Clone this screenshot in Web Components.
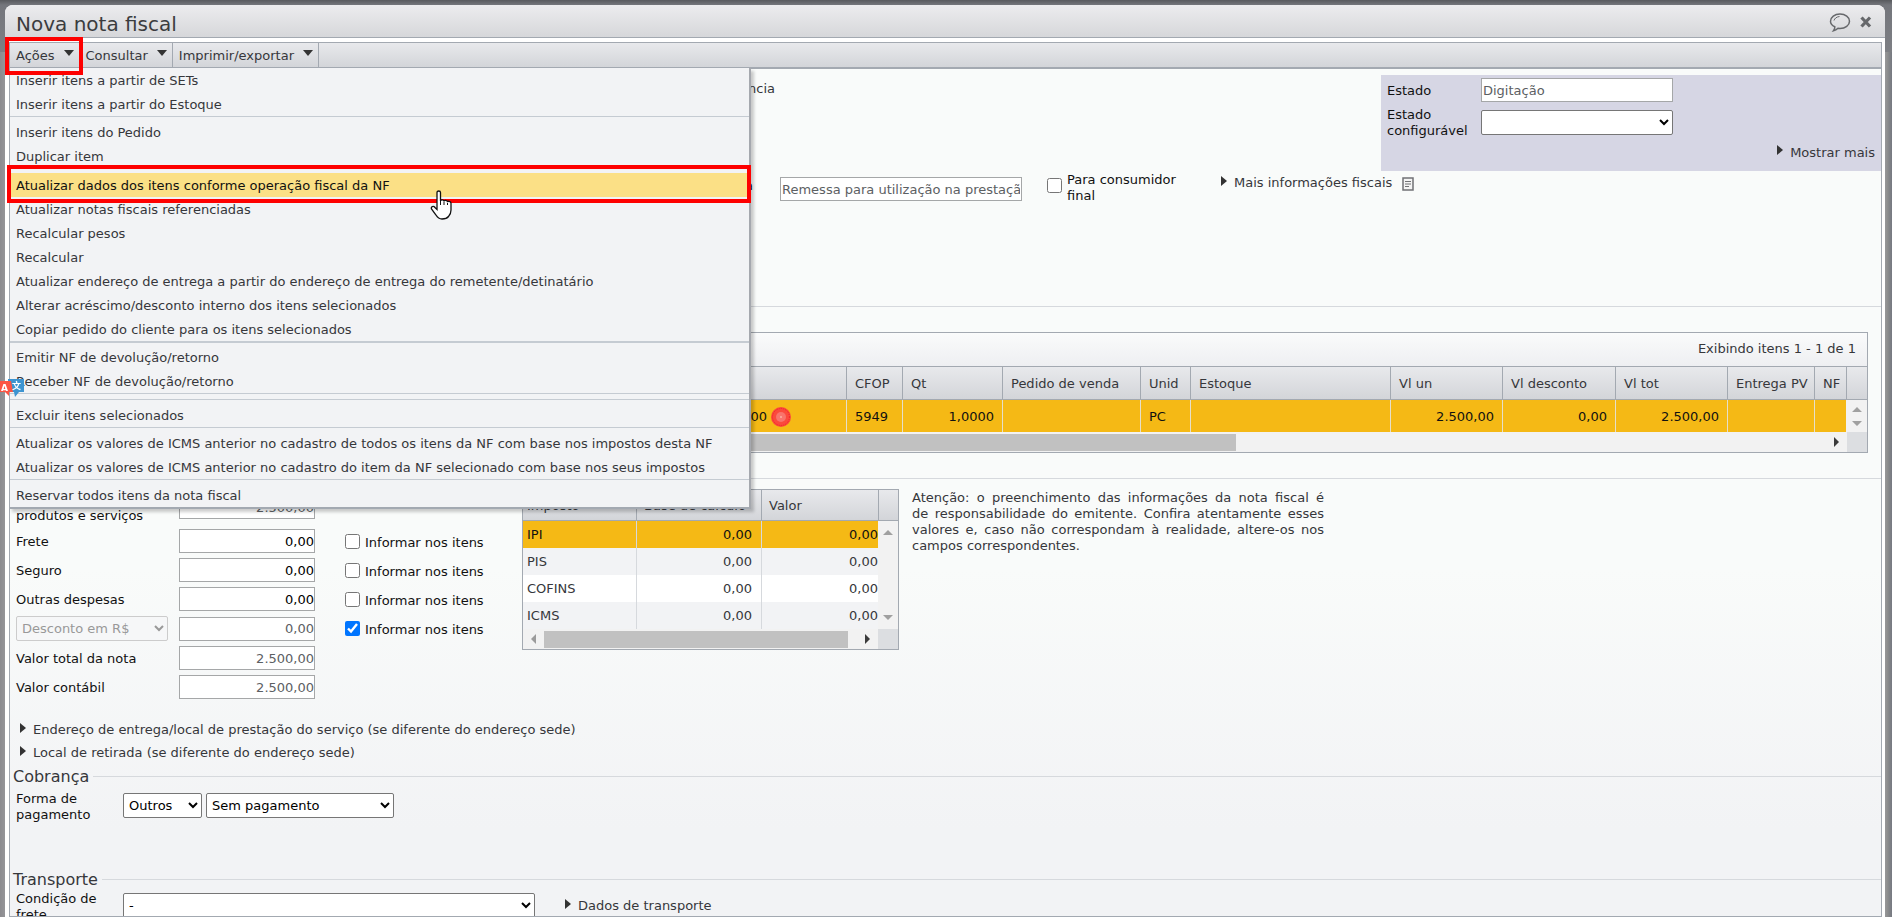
<!DOCTYPE html>
<html lang="pt-BR">
<head>
<meta charset="utf-8">
<title>Nova nota fiscal</title>
<style>
  html, body { height: 100%; }
  body {
    margin: 0; overflow: hidden;
    font: 13px/16px "DejaVu Sans", Verdana, sans-serif; color: #36373b;
    background: linear-gradient(90deg, #8b8b8f 0, #97979a 6px, #97979a calc(100% - 7px), #8f9090 calc(100% - 5px), #757880 100%);
    --line: #a3a9b1; --rule: #d6d9dd;
    --bar: linear-gradient(#e8e9ec, #d3d5d9);
    --plain: #f2f3f5; --gold: #f5b915; --red: #fe0000;
  }
</style>
</head>
<body>
<nf-window>
  <span slot="title">Nova nota fiscal</span>
  <nf-toolbar slot="toolbar">
    <nf-menu-button marked>Ações
      <nf-menu slot="menu">
        <nf-menu-item>Inserir itens a partir de SETs</nf-menu-item>
        <nf-menu-item>Inserir itens a partir do Estoque</nf-menu-item>
        <nf-separator></nf-separator>
        <nf-menu-item>Inserir itens do Pedido</nf-menu-item>
        <nf-menu-item>Duplicar item</nf-menu-item>
        <nf-separator></nf-separator>
        <nf-menu-item active>Atualizar dados dos itens conforme operação fiscal da NF</nf-menu-item>
        <nf-menu-item>Atualizar notas fiscais referenciadas</nf-menu-item>
        <nf-menu-item>Recalcular pesos</nf-menu-item>
        <nf-menu-item>Recalcular</nf-menu-item>
        <nf-menu-item>Atualizar endereço de entrega a partir do endereço de entrega do remetente/detinatário</nf-menu-item>
        <nf-menu-item>Alterar acréscimo/desconto interno dos itens selecionados</nf-menu-item>
        <nf-menu-item>Copiar pedido do cliente para os itens selecionados</nf-menu-item>
        <nf-separator heavy></nf-separator>
        <nf-menu-item>Emitir NF de devolução/retorno</nf-menu-item>
        <nf-menu-item>Receber NF de devolução/retorno</nf-menu-item>
        <nf-separator wide></nf-separator>
        <nf-separator></nf-separator>
        <nf-menu-item>Excluir itens selecionados</nf-menu-item>
        <nf-separator></nf-separator>
        <nf-menu-item>Atualizar os valores de ICMS anterior no cadastro de todos os itens da NF com base nos impostos desta NF</nf-menu-item>
        <nf-menu-item>Atualizar os valores de ICMS anterior no cadastro do item da NF selecionado com base nos seus impostos</nf-menu-item>
        <nf-separator></nf-separator>
        <nf-menu-item>Reservar todos itens da nota fiscal</nf-menu-item>
      </nf-menu>
    </nf-menu-button>
    <nf-menu-button>Consultar</nf-menu-button>
    <nf-menu-button>Imprimir/exportar</nf-menu-button>
  </nf-toolbar>

  <nf-general></nf-general>
  <nf-section class="items"><nf-items></nf-items></nf-section>
  <nf-section class="values"><nf-values></nf-values></nf-section>
  <nf-disclosure tall>Endereço de entrega/local de prestação do serviço (se diferente do endereço sede)</nf-disclosure>
  <nf-disclosure tall>Local de retirada (se diferente do endereço sede)</nf-disclosure>
  <nf-section class="payment"><span slot="legend">Cobrança</span><nf-payment></nf-payment></nf-section>
  <nf-section><span slot="legend">Transporte</span><nf-shipping></nf-shipping></nf-section>
</nf-window>
<nf-translate></nf-translate>

<script>
const controls = `
  *, *::before, *::after { box-sizing: border-box; }
  input, select, button { font: inherit; margin: 0; }
  input[type=text] { height: 24px; padding: 0 1px; border: 1px solid #a5a7a8; border-radius: 0; background: #fff; color: #000; outline: 0; }
  input[readonly] { color: #5c6063; }
  input.num { text-align: right; padding: 0; }
  input[type=checkbox] { width: 15px; height: 15px; }
  select { height: 25px; border: 1px solid #767676; border-radius: 2px; background: #fff; color: #000; padding: 0 0 0 1px; }
  label { color: #111; }
  table { border-collapse: separate; border-spacing: 0; table-layout: fixed; width: 100%; }
  th { font-weight: normal; text-align: left; }
`;

function define(name, css, html) {
  const template = document.createElement('template');
  template.innerHTML = `<style>${controls}${css}</style>${html}`;
  customElements.define(name, class extends HTMLElement {
    constructor() {
      super();
      this.attachShadow({ mode: 'open' }).append(template.content.cloneNode(true));
    }
  });
}

define('nf-window', `
  :host { display: flex; flex-direction: column; height: 100vh; padding: 5px 7px 0 5px; box-sizing: border-box;
    background: linear-gradient(#585a5e 0, #74767c 5px, #7d7f84 52px, transparent 52px); }
  .frame { flex: 1; min-height: 0; display: flex; flex-direction: column; background: #fff; border-radius: 8px 8px 0 0; }
  header { flex: none; display: flex; align-items: center; gap: 8px; height: 33px; padding: 6px 12px 0 11px; background: linear-gradient(#ececee, #d6d7da); border-bottom: 1px solid var(--line); border-radius: 8px 8px 0 0; }
  h1 { flex: 1; margin: 0; font-size: 20px; line-height: 26px; font-weight: normal; color: #3b3c3e; }
  button { display: flex; border: 0; padding: 0; background: none; margin-top: -4px; }
  .body { flex: 1; min-height: 0; display: flex; flex-direction: column; margin: 4px 3px 0 4px; }
  main { flex: 1; min-height: 0; overflow: hidden; border: 1px solid var(--line); border-top: 0; background: linear-gradient(#f9fbfa 500px, #f2f3f5 760px); }
  ::slotted(nf-section.items) { margin-bottom: 15px; }
  ::slotted(nf-section.values) { margin-bottom: 19px; }
  ::slotted(nf-section.payment) { margin-top: 2px; }
`, `
  <div class="frame">
    <header>
      <h1><slot name="title"></slot></h1>
      <button aria-label="Comentários"><svg width="22" height="20" viewBox="0 0 22 20" fill="none" stroke="#66686b" stroke-width="1.5"><path d="M5.8 14.8C3 13.600 1.500 11.500 1.500 9.300 1.500 5 5.700 2 11 2s9.500 3 9.500 7.200-4.200 7.200-9.500 7.200l-2-.1C7.800 17.500 6.200 18.500 4.500 18.800c1-1.200 1.400-2.500 1.300-4z"/><path d="M5 8.500C5.500 6.500 7.600 4.800 10.500 4.500" stroke-width="1"/></svg></button>
      <button aria-label="Fechar"><svg width="14" height="14" viewBox="0 0 14 14" stroke="#66686b" stroke-width="3.200"><path d="M2.500 2.500l8.500 9M11 2.500l-8.500 9"/></svg></button>
    </header>
    <div class="body">
      <slot name="toolbar"></slot>
      <main><slot></slot></main>
    </div>
  </div>`);

define('nf-toolbar', `
  :host { flex: none; display: flex; height: 27px; box-sizing: border-box; border: 1px solid var(--line); border-bottom-width: 2px; background: var(--bar); position: relative; z-index: 5; }
`, `<slot></slot>`);

define('nf-menu-button', `
  :host { display: flex; position: relative; border-right: 1px solid var(--line); }
  button { display: flex; align-items: center; gap: 9px; border: 0; padding: 2px 5px 0 6px; background: none; color: inherit; white-space: nowrap; }
  button svg { margin-top: -6px; }
  :host([marked]) button::after { content: ""; position: absolute; inset: -6px -4px -8px -5px; border: 4px solid var(--red); z-index: 3; }
`, `<button aria-haspopup="menu"><span><slot></slot></span><svg width="10" height="6"><path d="M0 0h10L5 6z" fill="#333"/></svg></button><slot name="menu"></slot>`);

define('nf-menu', `
  :host { display: block; position: absolute; top: 25px; left: -1px; z-index: 2; width: 742px; box-sizing: border-box; background: var(--plain);
    border: 1px solid var(--line); border-width: 0 2px 2px 1px; border-right-color: #a5a8ae; box-shadow: 3px 3px 3px #0003; }
`, `<div role="menu"><slot></slot></div>`);

define('nf-menu-item', `
  :host { display: block; position: relative; }
  button { display: block; width: 100%; height: 24px; border: 0; padding: 2px 0 0 6px; text-align: left; background: none; color: inherit; white-space: nowrap; }
  .cursor { display: none; }
  :host([active]) { z-index: 1; margin-top: 4px; }
  :host([active]) button { background: #fbe086; color: #111; }
  :host([active]) button::after { content: ""; position: absolute; inset: -8px -2px -6px -3px; border: 4px solid var(--red); }
  :host([active]) .cursor { display: block; position: absolute; left: 420px; top: 17px; }
`, `<button role="menuitem"><slot></slot></button>
  <svg class="cursor" width="22" height="30" viewBox="0 0 22 30"><path d="M7 2.500C7 .5 10.500.5 10.500 2.500V11c0-1.500 3.500-1.500 3.500.5 0-1.600 3.500-1.400 3.500.7 0-1.500 3.500-1.200 3.500 1V20c0 3-1 5-2.500 6.500-1.500 2-4 2.500-6.500 2.500-3 0-4.500-1.500-6-4L1.500 19C.5 16.500 3.500 15.500 5 17.500L7 19.500z" fill="#fff" stroke="#111" stroke-width="1.300"/><path d="M10.500 11v4M14 12v3M17.500 13v2" stroke="#111"/></svg>`);

define('nf-separator', `
  :host { display: block; height: 1px; margin-bottom: 3px; background: #c5cbd2; }
  :host([heavy]) { height: 2px; margin-bottom: 2px; }
  :host([wide]) { margin-bottom: 5px; }
`, ``);

define('nf-disclosure', `
  :host { display: block; }
  :host([tall]) { height: 23px; padding-left: 10px; }
  a { display: inline-flex; align-items: center; gap: 7px; color: inherit; text-decoration: none; line-height: 23px; white-space: nowrap; }
  svg { flex: none; margin-top: -4px; }
`, `<a href="#"><svg width="6" height="10"><path d="M0 0l6 5-6 5z" fill="#333"/></svg><slot></slot></a>`);

define('nf-section', `
  :host { display: block; }
  .legend { display: flex; align-items: center; gap: 4px; height: 20px; padding-left: 3px; font-size: 16px; line-height: 20px; }
  .legend::after { content: ""; flex: 1; height: 1px; background: var(--rule); }
  ::slotted([slot=legend]) { padding-top: 2px; }
`, `<div class="legend"><slot name="legend"></slot></div><slot></slot>`);

define('nf-general', `
  :host { display: block; padding-top: 6px; height: 227px; box-sizing: border-box; }
  .top { display: flex; justify-content: space-between; }
  .ref { width: 765px; padding-top: 6px; text-align: right; }
  .state { width: 500px; height: 96px; background: #d6d6e4; display: grid; grid-template-columns: 94px 192px; grid-template-rows: 24px 32px 20px; row-gap: 4px; padding: 3px 6px 0; }
  .state label { align-self: center; padding-top: 2px; }
  .state input, .state select { width: 192px; }
  .state select { align-self: center; }
  .more { grid-column: 1 / -1; width: 488px; text-align: right; align-self: center; }
  .row { display: flex; align-items: flex-start; padding-top: 6px; }
  .row .kind { width: 743px; margin-right: 27px; text-align: right; padding-top: 1px; }
  .row input[type=text] { width: 242px; }
  .row input[type=checkbox] { margin: 1px 5px 0 25px; }
  .row label.c { width: 120px; margin-top: -5px; }
  .row nf-disclosure { margin: -6px 10px 0 34px; }
`, `
  <div class="top">
    <div class="ref">Referência</div>
    <div class="state">
      <label for="st">Estado</label><input id="st" type="text" readonly value="Digitação">
      <label for="cf">Estado configurável</label><select id="cf"><option></option></select>
      <nf-disclosure class="more">Mostrar mais</nf-disclosure>
    </div>
  </div>
  <div class="row">
    <label class="kind" for="op">a</label>
    <input id="op" type="text" readonly value="Remessa para utilização na prestação de serviço">
    <input id="cons" type="checkbox"><label class="c" for="cons">Para consumidor final</label>
    <nf-disclosure>Mais informações fiscais</nf-disclosure>
    <svg width="12" height="14" viewBox="0 0 12 14" fill="none" stroke="#707275"><rect x="1" y="1" width="10" height="12" stroke-width="1.500" fill="#f4f4f4"/><path d="M3 4.500h6M3 7h6M3 9.500h4"/></svg>
  </div>`);

define('nf-scrollbar', `
  :host { display: grid; grid-template-columns: 1fr 20px; height: 20px; }
  .track { display: flex; align-items: center; gap: 8px; padding: 0 8px; background: #f2f2f2; }
  .rail { flex: 1; height: 17px; }
  .thumb { height: 17px; width: var(--thumb, 94%); background: #c1c1c1; }
  .corner { background: #dcdee1; }
`, `<div class="track"><svg width="5" height="10"><path d="M5 0L0 5l5 5z" fill="#9b9b9b"/></svg><div class="rail"><div class="thumb"></div></div><svg width="5" height="10"><path d="M0 0l5 5-5 5z" fill="#3b3b3b"/></svg></div><div class="corner"></div>`);

define('nf-items', `
  :host { display: block; margin: 16px 13px 0 6px; border: 1px solid var(--line); }
  .info { height: 33px; padding: 8px 11px 0; text-align: right; background: linear-gradient(#fafbfb, #eeeff2); }
  th { height: 34px; padding: 1px 0 0 8px; border: 1px solid var(--line); border-width: 1px 0 1px 1px; background: var(--bar); white-space: nowrap; }
  th:first-child, td:first-child { border-left: 0; }
  td { height: 32px; padding: 2px 8px 0; border-left: 1px solid #e6dfca; background: var(--gold); color: #111; }
  .r { text-align: right; }
  .status { width: 775px; display: flex; justify-content: flex-end; align-items: center; gap: 4px; margin-left: -9px; }
  td.v { padding: 0; background: #f2f2f2; border: 0; }
  td.v svg { display: block; margin: 0 auto; }
  nf-scrollbar { --thumb: 67%; }
`, `
  <div class="info">Exibindo itens 1 - 1 de 1</div>
  <table>
    <colgroup><col><col style="width:56px"><col style="width:100px"><col style="width:138px"><col style="width:50px"><col style="width:200px"><col style="width:112px"><col style="width:113px"><col style="width:112px"><col style="width:87px"><col style="width:32px"><col style="width:21px"></colgroup>
    <thead><tr><th></th><th>CFOP</th><th>Qt</th><th>Pedido de venda</th><th>Unid</th><th>Estoque</th><th>Vl un</th><th>Vl desconto</th><th>Vl tot</th><th>Entrega PV</th><th>NF</th><th></th></tr></thead>
    <tbody><tr>
      <td><div class="status"><span>0,00</span><svg width="20" height="20"><circle cx="10" cy="10" r="10" fill="#fb4a3c"/><circle cx="10" cy="10" r="8.500" fill="none" stroke="#f3202a" stroke-dasharray="1 1"/><circle cx="10" cy="10" r="5" fill="#f9746c"/><circle cx="10" cy="10" r="1" fill="#fbb0a0"/></svg></div></td>
      <td>5949</td><td class="r">1,0000</td><td></td><td>PC</td><td></td><td class="r">2.500,00</td><td class="r">0,00</td><td class="r">2.500,00</td><td></td><td></td>
      <td class="v"><svg width="10" height="19"><path d="M0 5h10L5 0zM0 14h10L5 19z" fill="#a0a0a0"/></svg></td>
    </tr></tbody>
  </table>
  <nf-scrollbar></nf-scrollbar>`);

define('nf-taxes', `
  :host { display: block; width: 377px; border: 1px solid var(--line); }
  th { height: 31px; padding: 1px 7px 0; border: 1px solid var(--line); border-width: 0 0 1px 1px; background: var(--bar); white-space: nowrap; }
  th:first-child, td:first-child { border-left: 0; padding-left: 4px; }
  .grid { display: grid; grid-template-columns: 1fr 20px; }
  td { height: 27px; padding: 1px 9px 0; border-left: 1px solid var(--rule); background: var(--plain); text-align: right; }
  td:first-child { text-align: left; }
  td:last-child { padding-right: 0; }
  tr:nth-child(odd) td { background: #fff; }
  tr:first-child td { background: var(--gold); color: #111; }
  .v { display: flex; flex-direction: column; justify-content: space-between; align-items: center; padding: 9px 0; background: #f2f2f2; }
  nf-scrollbar { --thumb: 97%; }
`, `
  <table><colgroup><col style="width:113px"><col style="width:125px"><col><col style="width:20px"></colgroup><thead><tr><th>Imposto</th><th>Base de cálculo</th><th>Valor</th><th></th></tr></thead></table>
  <div class="grid">
    <table><colgroup><col style="width:113px"><col style="width:125px"><col></colgroup><tbody>
      <tr><td>IPI</td><td>0,00</td><td>0,00</td></tr>
      <tr><td>PIS</td><td>0,00</td><td>0,00</td></tr>
      <tr><td>COFINS</td><td>0,00</td><td>0,00</td></tr>
      <tr><td>ICMS</td><td>0,00</td><td>0,00</td></tr>
    </tbody></table>
    <div class="v"><svg width="10" height="5"><path d="M0 5h10L5 0z" fill="#a0a0a0"/></svg><svg width="10" height="5"><path d="M0 0h10L5 5z" fill="#a0a0a0"/></svg></div>
  </div>
  <nf-scrollbar></nf-scrollbar>`);

define('nf-values', `
  :host { display: flex; align-items: flex-start; padding-top: 1px; }
  .form { display: grid; grid-template-columns: 163px 136px 29px 178px; row-gap: 5px; align-items: center; padding: 1px 0 0 6px; }
  .form > input { width: 136px; }
  .form > label { padding-top: 2px; }
  .form select { width: 152px; }
  .form select:disabled { background: #f6f7f8; color: #999; border-color: #ccc; opacity: 1; }
  .form > .chk { grid-column: 4; display: flex; align-items: center; gap: 5px; padding-left: 1px; }
  .form > .chk label { padding-top: 3px; }
  .one { grid-column: 1; }
  .form > .first { height: 34px; display: block; padding-top: 18px; }
  p { margin: 1px 0 0 13px; width: 412px; text-align: justify; }
`, `
  <div class="form">
    <label class="one first" for="v0">produtos e serviços</label><input class="num" id="v0" type="text" readonly value="2.500,00">
    <label class="one" for="v1">Frete</label><input class="num" id="v1" type="text" value="0,00"><span class="chk"><input type="checkbox" id="c1"><label for="c1">Informar nos itens</label></span>
    <label class="one" for="v2">Seguro</label><input class="num" id="v2" type="text" value="0,00"><span class="chk"><input type="checkbox" id="c2"><label for="c2">Informar nos itens</label></span>
    <label class="one" for="v3">Outras despesas</label><input class="num" id="v3" type="text" value="0,00"><span class="chk"><input type="checkbox" id="c3"><label for="c3">Informar nos itens</label></span>
    <select class="one" aria-label="Tipo de desconto" disabled><option>Desconto em R$</option></select><input class="num" type="text" aria-label="Desconto" readonly value="0,00"><span class="chk"><input type="checkbox" id="c4" checked><label for="c4">Informar nos itens</label></span>
    <label class="one" for="v5">Valor total da nota</label><input class="num" id="v5" type="text" readonly value="2.500,00">
    <label class="one" for="v6">Valor contábil</label><input class="num" id="v6" type="text" readonly value="2.500,00">
  </div>
  <nf-taxes></nf-taxes>
  <p>Atenção: o preenchimento das informações da nota fiscal é de&nbsp;responsabilidade do emitente. Confira atentamente esses valores e, caso não correspondam à realidade, altere-os nos campos correspondentes.</p>`);

define('nf-payment', `
  :host { display: flex; align-items: flex-start; gap: 4px; padding: 5px 0 46px 6px; }
  label { width: 103px; padding-right: 20px; }
  .a { width: 79px; } .b { width: 188px; }
  select { margin-top: 2px; }
`, `<label for="fp">Forma de pagamento</label><select class="a" id="fp"><option>Outros</option></select><select class="b" aria-label="Condição de pagamento"><option>Sem pagamento</option></select>`);

define('nf-shipping', `
  :host { display: flex; align-items: flex-start; gap: 4px; padding: 2px 0 0 6px; }
  label { width: 103px; padding-right: 15px; }
  select { width: 412px; margin-top: 2px; }
  nf-disclosure { margin: 3px 0 0 26px; }
`, `<label for="cfr">Condição de frete</label><select id="cfr"><option>-</option></select><nf-disclosure>Dados de transporte</nf-disclosure>`);

define('nf-translate', `
  :host { position: fixed; left: 0; top: 378px; z-index: 10; }
  svg { display: block; }
  text { font-family: "DejaVu Sans", "Noto Sans CJK SC", sans-serif; font-weight: bold; }
`, `<svg width="24" height="20" viewBox="0 0 24 20"><path d="M8 1h16v13h-5l-4 5-1-5H8z" fill="#3d94d1"/><path d="M0 3h11l2 11H9v4l-4-4H0z" fill="#fb5544"/><text x="1" y="13" font-size="9" fill="#fff">A</text><text x="12" y="11" font-size="9" fill="#fff">文</text></svg>`);
</script>
</body>
</html>
